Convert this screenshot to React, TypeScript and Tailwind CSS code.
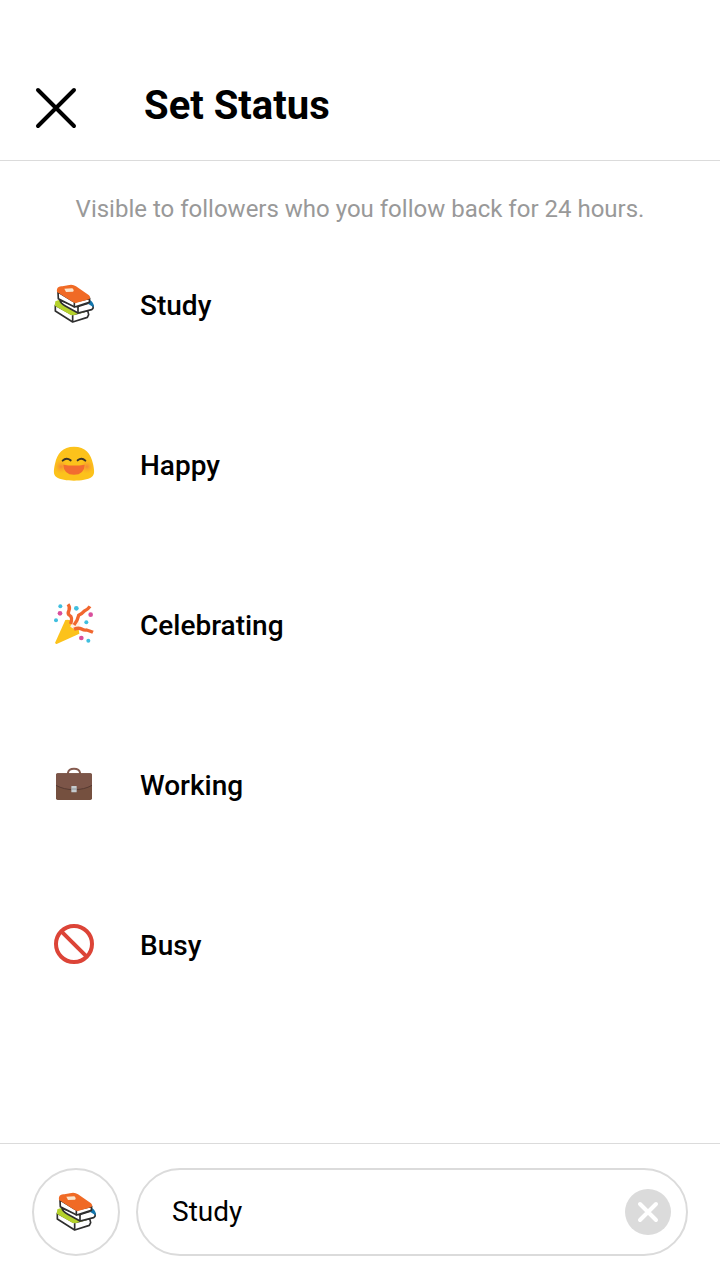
import { useState, type ReactNode } from "react";

const BooksIcon = () => (
  <svg viewBox="0 0 180 180" className="size-[60px]" aria-hidden="true">
    <g strokeLinejoin="round" strokeLinecap="round">
      <path d="M34 94 L86 122 L131 110 L134 122 L130 130 L86 144 L34 111 Z" fill="#fff" stroke="#2f2f2f" strokeWidth="5" />
      <path d="M32 95 L34 82 L47 77 L98 112 L124 113 L88 124 L80 123 Z" fill="#b5d22c" />
      <path d="M86 126 L86 142" fill="none" stroke="#2f2f2f" strokeWidth="5" />
      <path d="M48 79 L100 98 L138 86 Q150 93 147 103 L143 107 L102 117 L64 96 Q50 88 48 79 Z" fill="#fff" stroke="#2f2f2f" strokeWidth="5" />
      <path d="M127 83 L138 78 Q151 87 149 100 L134 91 Z" fill="#1176ae" />
      <path d="M102 100 L102 117" fill="none" stroke="#2f2f2f" strokeWidth="5" />
      <path d="M42 54 L91 84 L137 73 L136 85 L92 99 L43 74 Z" fill="#fff" stroke="#2f2f2f" strokeWidth="5" />
      <path d="M39 54 Q37 43 44 39 Q49 36 55 37 L76 33 Q87 31 96 37 L135 64 Q142 72 135 76 L93 88 L85 83 Z" fill="#f06a25" />
      <path d="M91 89 L91 98" fill="none" stroke="#2f2f2f" strokeWidth="5" />
      <path d="M61 44 L85 43 Q92 50 87 53 L66 54 Z" fill="#fbe4cb" />
    </g>
  </svg>
);

const HappyIcon = () => (
  <svg viewBox="0 0 180 180" className="size-[60px]" aria-hidden="true">
    <defs>
      <radialGradient id="cheek">
        <stop offset="0" stopColor="#f47a3c" stopOpacity="0.8" />
        <stop offset="1" stopColor="#f9a825" stopOpacity="0" />
      </radialGradient>
    </defs>
    <path d="M90 38 C124 38 141 59 147 90 C151 108 153 122 143 129 C132 137 111 140 90 140 C69 140 48 137 37 129 C27 122 29 108 33 90 C39 59 56 38 90 38 Z" fill="#fcc21b" />
    <circle cx="51" cy="98" r="22" fill="url(#cheek)" />
    <circle cx="129" cy="98" r="22" fill="url(#cheek)" />
    <path d="M58 92 Q90 97 122 92 Q121 122 90 122 Q59 122 58 92 Z" fill="#f26c30" />
    <path d="M56 80 Q67 69 80 79 M101 79 Q113 69 124 80" fill="none" stroke="#3b3328" strokeWidth="6" strokeLinecap="round" />
  </svg>
);

const CelebratingIcon = () => (
  <svg viewBox="0 0 180 180" className="size-[60px]" aria-hidden="true">
    <path d="M64 78 Q78 74 91 85 Q105 98 106 119 L38 150 Q33 151 34 145 Z" fill="#fcc21b" />
    <path d="M85 81 L98 76 L109 88 L101 108 L91 106 L79 98 Z" fill="#fff0e5" />
    <g fill="none" stroke="#f1672f" strokeWidth="10">
      <path d="M72 31 Q79 40 75 49 Q69 60 78 65 Q86 69 80 90" />
      <path d="M138 37 Q132 46 120 52 Q113 60 104 64 Q101 79 90 93" />
      <path d="M90 106 Q103 100 113 105 Q121 110 128 108 Q136 110 147 115" />
    </g>
    <g fill="#40bfdf">
      <circle cx="49" cy="37" r="6" />
      <circle cx="97" cy="43" r="7" />
      <circle cx="36" cy="79" r="6" />
      <circle cx="127" cy="85" r="6" />
      <circle cx="133" cy="140" r="6" />
    </g>
    <g fill="#d94f9c">
      <circle cx="48" cy="58" r="7" />
      <circle cx="140" cy="62" r="7" />
      <circle cx="112" cy="132" r="7" />
    </g>
  </svg>
);

const WorkingIcon = () => (
  <svg viewBox="0 0 180 180" className="size-[60px]" aria-hidden="true">
    <path d="M72 60 V56 Q74 44 90 44 Q106 44 108 56 V60" fill="none" stroke="#865c50" strokeWidth="6" />
    <rect x="36" y="58" width="108" height="80" rx="5" fill="#75503f" />
    <path d="M41 58 H139 Q144 58 144 63 V94 Q121 107 90 107 Q59 107 36 94 V63 Q36 58 41 58 Z" fill="#7c5548" />
    <path d="M36 94 Q59 107 90 107 Q121 107 144 94" fill="none" stroke="#573a32" strokeWidth="3" />
    <rect x="82" y="96" width="16" height="19" rx="1" fill="#c5cbce" />
    <path d="M82 105 H98" stroke="#8c9296" strokeWidth="3" />
  </svg>
);

const BusyIcon = () => (
  <svg viewBox="0 0 180 180" className="size-[60px]" aria-hidden="true">
    <g fill="none" stroke="#dc4437" strokeWidth="12">
      <circle cx="90" cy="90" r="54" />
      <path d="M52 52 L128 128" />
    </g>
  </svg>
);

const statuses: { label: string; icon: ReactNode }[] = [
  { label: "Study", icon: <BooksIcon /> },
  { label: "Happy", icon: <HappyIcon /> },
  { label: "Celebrating", icon: <CelebratingIcon /> },
  { label: "Working", icon: <WorkingIcon /> },
  { label: "Busy", icon: <BusyIcon /> },
];

export default function App() {
  const [status, setStatus] = useState("Study");
  const selected = statuses.find((s) => s.label === status) ?? statuses[0];

  return (
    <div className="flex min-h-screen flex-col bg-white font-['Roboto',sans-serif] text-black">
      <header className="flex items-center gap-16 border-b border-[#dbdbdb] px-8 pt-[68px] pb-4">
        <button type="button" aria-label="Close" className="pt-1">
          <svg viewBox="0 0 48 48" className="size-12" fill="none" stroke="currentColor" strokeWidth="4" strokeLinecap="round">
            <path d="M6 6 L42 42 M42 6 L6 42" />
          </svg>
        </button>
        <h1 className="text-[40px] leading-[76px] font-bold">Set Status</h1>
      </header>

      <main className="flex-1">
        <p className="px-8 pt-[33px] text-center text-2xl leading-[30px] text-[#999999]">
          Visible to followers who you follow back for 24 hours.
        </p>
        <ul>
          {statuses.map(({ label, icon }) => (
            <li key={label}>
              <button
                type="button"
                onClick={() => setStatus(label)}
                className="flex h-40 w-full items-center gap-9 px-11 text-left text-[28px] leading-9 font-medium"
              >
                {icon}
                <span className="pt-1">{label}</span>
              </button>
            </li>
          ))}
        </ul>
      </main>

      <footer className="flex items-center gap-4 border-t border-[#dbdbdb] px-8 py-6">
        <button
          type="button"
          aria-label="Choose emoji"
          className="flex size-[88px] shrink-0 items-center justify-center rounded-full border-2 border-[#dbdbdb]"
        >
          {selected.icon}
        </button>
        <div className="flex h-[88px] min-w-0 flex-1 items-center rounded-full border-2 border-[#dbdbdb] pr-[15px] pl-[34px]">
          <input
            type="text"
            aria-label="Status"
            value={status}
            onChange={(e) => setStatus(e.target.value)}
            className="min-w-0 flex-1 text-[28px] leading-9 outline-none"
          />
          <button type="button" aria-label="Clear status" onClick={() => setStatus("")}>
            <svg viewBox="0 0 46 46" className="size-[46px]">
              <circle cx="23" cy="23" r="23" fill="#dbdbdb" />
              <path d="M15 15 L31 31 M31 15 L15 31" stroke="#fff" strokeWidth="4" strokeLinecap="round" />
            </svg>
          </button>
        </div>
      </footer>
    </div>
  );
}
